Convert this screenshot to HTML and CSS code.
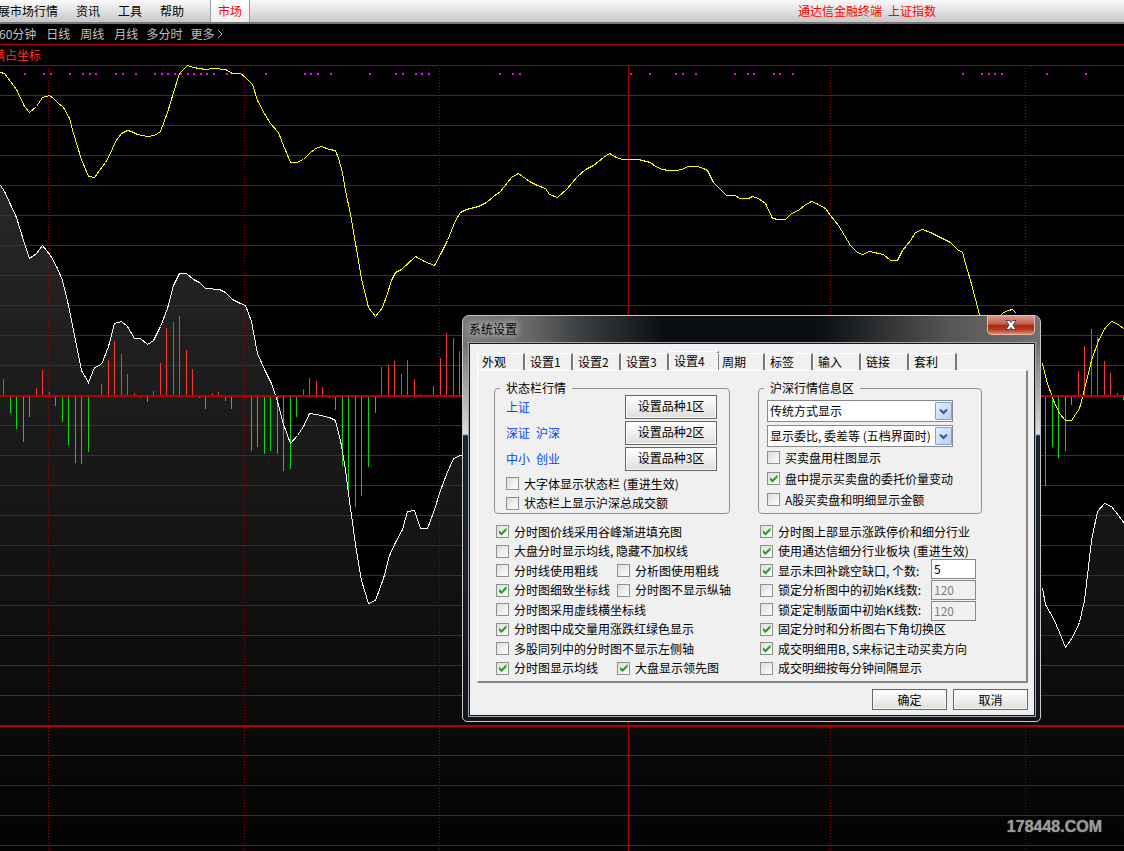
FILE: index.html
```html
<!DOCTYPE html>
<html lang="zh-CN">
<head>
<meta charset="utf-8">
<title>通达信金融终端</title>
<link rel="stylesheet" href="styles.css">
</head>
<body>
<header class="menubar">
  <nav class="menus">
    <button class="menu">展市场行情</button>
    <button class="menu">资讯</button>
    <button class="menu">工具</button>
    <button class="menu">帮助</button>
  </nav>
  <button class="market">市场</button>
  <h1 class="app-title">通达信金融终端&ensp;上证指数</h1>
</header>
<nav class="periods">
  <button class="period">60分钟</button>
  <button class="period">日线</button>
  <button class="period">周线</button>
  <button class="period">月线</button>
  <button class="period tight">多分时</button>
  <button class="period tight">更多 <svg class="chevron" viewBox="0 0 6 10" aria-hidden="true"><path d="M1 1l4 4-4 4"/></svg></button>
</nav>
<main class="stage">
  <p class="axis-note"><span>满占坐标</span></p>
  <svg class="chart" viewBox="0 62 1124 789" preserveAspectRatio="xMinYMin slice" role="img" aria-label="上证指数分时走势">
    <defs>
      <linearGradient id="fill" gradientUnits="userSpaceOnUse" x1="0" y1="65" x2="0" y2="851">
        <stop offset="0" stop-color="#2e2e2e"/><stop offset="1" stop-color="#030303"/>
      </linearGradient>
    </defs>
    <path fill="url(#fill)" d="M0 185L4 191 16 217 24 243 29 258 36 253 42 245 50 255 57 268 62 280 68 305 75 340 81 370 88 382 94 367 101 364 108 346 114 323 121 321 127 326 134 338 140 338 147 344 153 340 160 326 167 308 173 285 179 273 186 273 193 279 199 282 205 288 219 289 225 292 232 299 240 303 245 305 251 321 257 353 264 369 271 383 277 401 283 424 290 443 297 435 303 426 309 413 316 414 329 417 335 420 341 445 345 470 348 493 355 544 361 580 368 603 375 600 383 578 389 555 395 542 402 529 407 511 414 510 420 528 427 528 433 512 440 490 446 474 453 458 460 455 1000 455 1042 588 1045 604 1053 618 1059 632 1065 647 1072 637 1079 622 1084 600 1088 566 1091 540 1097 511 1104 503 1111 506 1118 515 1124 523V851H0Z"/>
    <g class="crisp" transform="translate(.5 .5)">
      <path class="grid" d="M-1 65H1124M-1 95H1124M-1 125H1124M-1 155H1124M-1 185H1124M-1 215H1124M-1 245H1124M-1 275H1124M-1 305H1124M-1 335H1124M-1 365H1124M-1 425H1124M-1 455H1124M-1 485H1124M-1 515H1124M-1 545H1124M-1 575H1124M-1 605H1124M-1 635H1124M-1 665H1124M-1 695H1124M-1 755H1124M-1 785H1124M-1 815H1124M-1 845H1124M628 65V851"/>
      <path class="grid dots" d="M48 67.5V851M244 67.5V851M439 67.5V851M830 67.5V851M1025 67.5V851"/>
      <path class="up" d="M3 378V395M36 387V395M42 369V395M49 391V395M101 383V395M108 359V395M114 340V395M121 353V395M127 373V395M134 392V395M153 390V395M160 362V395M166 327V395M173 321V395M179 315V395M186 349V395M192 368V395M212 392V395M218 391V395M303 388V395M309 377V395M316 380V395M322 386V395M381 366V395M388 364V395M394 360V395M401 373V395M407 359V395M414 378V395M420 393V395M427 394V395M433 385V395M440 357V395M446 332V395M453 337V395M459 350V395M1078 370V395M1084 345V395M1091 328V395M1097 336V395M1104 360V395M1110 372V395M1117 392V395"/>
      <path class="down" d="M10 396V412M16 396V428M23 396V441M29 396V416M55 396V405M62 396V421M68 396V444M75 396V462M81 396V463M88 396V451M140 396V397M147 396V401M199 396V397M205 396V408M225 396V400M231 396V408M251 396V450M257 396V446M264 396V453M270 396V450M277 396V453M283 396V470M290 396V468M296 396V416M329 396V397M335 396V409M342 396V465M348 396V495M355 396V506M361 396V495M368 396V466M375 396V412M1045 396V485M1052 396V446M1058 396V457M1065 396V450M1071 396V404M1123 396V399"/>
      <path class="price" d="M0 185L4 191 16 217 24 243 29 258 36 253 42 245 50 255 57 268 62 280 68 305 75 340 81 370 88 382 94 367 101 364 108 346 114 323 121 321 127 326 134 338 140 338 147 344 153 340 160 326 167 308 173 285 179 273 186 273 193 279 199 282 205 288 219 289 225 292 232 299 240 303 245 305 251 321 257 353 264 369 271 383 277 401 283 424 290 443 297 435 303 426 309 413 316 414 329 417 335 420 341 445 345 470 348 493 355 544 361 580 368 603 375 600 383 578 389 555 395 542 402 529 407 511 414 510 420 528 427 528 433 512 440 490 446 474 453 458 460 455 470 455M1042 588L1045 604 1053 618 1059 632 1065 647 1072 637 1079 622 1084 600 1088 566 1091 540 1097 511 1104 503 1111 506 1118 515 1124 523"/>
      <path class="average" d="M0 72L4 73 16 89 24 106 29 112 36 106 42 97 49 95 53 98 57 102 63 107 69 118 73 133 77 146 81 159 88 176 94 177 99 170 105 162 109 155 115 141 121 133 127 130 131 131 137 134 147 136 154 135 160 131 167 112 173 92 179 73 187 65 193 67 205 69 213 68 225 69 232 73 240 73 245 77 252 84 257 100 265 115 270 123 278 132 283 145 290 162 296 162 303 159 309 153 315 148 321 146 329 149 335 150 338 158 342 172 344 185 350 214 355 243 361 278 368 307 375 316 382 307 386 296 391 280 395 272 401 269 415 256 424 261 434 265 441 252 447 240 455 220 460 212 466 209 478 206 486 202 493 196 500 191 511 177 518 173 529 181 537 185 545 188 549 194 557 197 566 189 577 176 585 169 593 165 603 157 609 153 616 157 622 159 638 159 650 162 655 166 662 169 668 170 677 170 684 168 687 166 697 166 703 168 707 170 713 182 726 195 735 195 739 198 748 198 752 196 758 198 765 203 772 218 778 219 785 219 791 213 798 210 804 205 811 201 816 203 825 208 830 215 838 225 850 245 857 252 862 254 869 251 883 254 890 260 897 260 902 250 910 240 915 232 922 229 930 232 950 242 957 249 962 252 965 263 970 280 979 314 984 325M998 317L1003 312 1008 310 1012 309 1016 313M1042 363L1046 380 1053 400 1059 413 1065 420 1071 420 1079 408 1085 385 1091 360 1098 340 1105 327 1111 321 1118 324 1124 329"/>
    </g>
    <g class="crisp">
      <path class="axis" d="M0 396H1124M0 726H1124"/>
      <path class="ticks" d="M24 74h2m17 0h2m5 0h2m17 0h2m11 0h2m5 0h2m4 0h2m18 0h2m5 0h2m11 0h2m17 0h2m5 0h2m4 0h2m5 0h2m4 0h2m5 0h2m4 0h2m5 0h2m4 0h2m5 0h2m11 0h2m37 0h2m37 0h2m4 0h2m5 0h2m11 0h2m37 0h2m24 0h2m5 0h2m11 0h2m4 0h2m5 0h2m69 0h2m11 0h2m5 0h2m109 0h2m17 0h2m24 0h2m5 0h2m11 0h2m37 0h2m11 0h2m4 0h2m18 0h2m4 0h2m11 0h2m168 0h2m17 0h2m5 0h2m4 0h2m5 0h2m43 0h2m37 0h2"/>
    </g>
  </svg>
  <p class="watermark">178448.COM</p>
</main>

<section class="dialog" role="dialog" aria-labelledby="dialog-title">
  <header class="titlebar">
    <h2 class="dialog-title" id="dialog-title">系统设置</h2>
    <button class="close" aria-label="关闭"><svg viewBox="0 0 12 10" aria-hidden="true"><path d="M1 .5h3.500l1.500 2 1.500-2H11L8 5l3 4.500H7.500L6 7.500l-1.500 2H1L4 5z"/></svg></button>
  </header>
  <div class="client">
    <div class="tabs" role="tablist">
      <button class="tab" role="tab">外观</button>
      <button class="tab" role="tab">设置1</button>
      <button class="tab" role="tab">设置2</button>
      <button class="tab" role="tab">设置3</button>
      <button class="tab selected" role="tab" aria-selected="true">设置4</button>
      <button class="tab" role="tab">周期</button>
      <button class="tab" role="tab">标签</button>
      <button class="tab" role="tab">输入</button>
      <button class="tab" role="tab">链接</button>
      <button class="tab" role="tab">套利</button>
    </div>
    <div class="panel" role="tabpanel">
      <div class="column">
        <fieldset class="group">
          <legend>状态栏行情</legend>
          <div class="group-body status">
            <div class="quote"><span>上证</span><button class="button">设置品种1区</button></div>
            <div class="quote"><span>深证&ensp;沪深</span><button class="button">设置品种2区</button></div>
            <div class="quote"><span>中小&ensp;创业</span><button class="button">设置品种3区</button></div>
            <div class="status-options">
              <label class="check"><input type="checkbox">大字体显示状态栏 (重进生效)</label>
              <label class="check"><input type="checkbox">状态栏上显示沪深总成交额</label>
            </div>
          </div>
        </fieldset>
        <div class="options left">
          <label class="check wide"><input type="checkbox" checked>分时图价线采用谷峰渐进填充图</label>
          <label class="check wide"><input type="checkbox">大盘分时显示均线, 隐藏不加权线</label>
          <label class="check"><input type="checkbox">分时线使用粗线</label>
          <label class="check"><input type="checkbox">分析图使用粗线</label>
          <label class="check"><input type="checkbox" checked>分时图细致坐标线</label>
          <label class="check"><input type="checkbox">分时图不显示纵轴</label>
          <label class="check wide"><input type="checkbox">分时图采用虚线横坐标线</label>
          <label class="check wide"><input type="checkbox" checked>分时图中成交量用涨跌红绿色显示</label>
          <label class="check wide"><input type="checkbox">多股同列中的分时图不显示左侧轴</label>
          <label class="check"><input type="checkbox" checked>分时图显示均线</label>
          <label class="check"><input type="checkbox" checked>大盘显示领先图</label>
        </div>
      </div>
      <div class="column">
        <fieldset class="group">
          <legend>沪深行情信息区</legend>
          <div class="group-body info">
            <div class="picker">
              <select aria-label="显示方式"><option>传统方式显示</option></select>
              <span class="arrow"><svg viewBox="0 0 9 7" aria-hidden="true"><path d="M1 1.500l3.500 3.500L8 1.500"/></svg></span>
            </div>
            <div class="picker">
              <select aria-label="显示内容"><option>显示委比, 委差等 (五档界面时)</option></select>
              <span class="arrow"><svg viewBox="0 0 9 7" aria-hidden="true"><path d="M1 1.500l3.500 3.500L8 1.500"/></svg></span>
            </div>
            <div class="info-options">
              <label class="check"><input type="checkbox">买卖盘用柱图显示</label>
              <label class="check"><input type="checkbox" checked>盘中提示买卖盘的委托价量变动</label>
              <label class="check"><input type="checkbox">A股买卖盘和明细显示金额</label>
            </div>
          </div>
        </fieldset>
        <div class="options right">
          <label class="check wide"><input type="checkbox" checked>分时图上部显示涨跌停价和细分行业</label>
          <label class="check wide"><input type="checkbox" checked>使用通达信细分行业板块 (重进生效)</label>
          <label class="check" id="gap-label"><input type="checkbox" checked>显示未回补跳空缺口, 个数:</label>
          <label class="check" id="analysis-label"><input type="checkbox">锁定分析图中的初始K线数:</label>
          <label class="check" id="layout-label"><input type="checkbox">锁定定制版面中初始K线数:</label>
          <label class="check wide"><input type="checkbox" checked>固定分时和分析图右下角切换区</label>
          <label class="check wide"><input type="checkbox" checked>成交明细用B, S来标记主动买卖方向</label>
          <label class="check wide"><input type="checkbox">成交明细按每分钟间隔显示</label>
          <div class="numbers">
            <input class="number" type="text" value="5" aria-labelledby="gap-label">
            <input class="number" type="text" value="120" aria-labelledby="analysis-label" disabled>
            <input class="number" type="text" value="120" aria-labelledby="layout-label" disabled>
          </div>
        </div>
      </div>
    </div>
    <footer class="actions">
      <button class="button">确定</button>
      <button class="button">取消</button>
    </footer>
  </div>
</section>
</body>
</html>
```
FILE: styles.css
```css
* { box-sizing: border-box; }

body {
  margin: 0;
  height: 100vh;
  display: flex;
  flex-direction: column;
  overflow: hidden;
  background: #000;
  color: #000;
  font: 12px/14px "Noto Sans CJK SC", "Liberation Sans", sans-serif;
}

button, input, select { font: inherit; color: inherit; margin: 0; }
button { padding: 0; border: 0; background: none; white-space: nowrap; }
h1, h2, p { margin: 0; font: inherit; }

/* Main window bars */
.menubar {
  display: flex;
  flex: none;
  height: 24px;
  background: linear-gradient(#fafafa, #c8c8c8);
  border-bottom: 2px solid #777;
}
.menus { display: flex; gap: 18px; width: 212px; margin-left: -2px; }
.market {
  width: 40px;
  color: #f00;
  background: linear-gradient(#fff, #eee);
  border-left: 1px solid #999;
  border-right: 1px solid #999;
}
.app-title { margin-left: auto; margin-right: 188px; line-height: 22px; color: #f00; }

.periods {
  display: flex;
  flex: none;
  gap: 10px;
  height: 21px;
  margin-left: -1px;
  color: #c0c0c0;
  border-bottom: 1px solid #b00000;
}
.period.tight { margin-left: -2px; }
.chevron { width: 6px; height: 10px; fill: none; stroke: #c0c0c0; }

/* Chart */
.stage { position: relative; display: flex; flex: 1; flex-direction: column; min-height: 0; }
.axis-note { flex: none; height: 17px; line-height: 20px; color: #f33; }
.axis-note span { margin-left: -7px; }
.chart { display: block; flex: 1; width: 100%; min-height: 0; }
.crisp { shape-rendering: crispEdges; fill: none; }
.grid { stroke: #a80000; }
.dots { stroke-dasharray: 1 2; }
.axis { stroke: #b00000; stroke-width: 2; }
.up { stroke: #f33; }
.down { stroke: #00e000; }
.price { stroke: #fff; }
.average { stroke: #ff0; }
.ticks { stroke: #f0f; stroke-width: 2; }
.watermark {
  position: absolute;
  right: 22px;
  bottom: 12px;
  color: #999;
  font: bold 16px/24px "Liberation Sans", sans-serif;
  text-shadow: 0 0 1px #999;
}

/* Dialog window */
.dialog {
  position: absolute;
  left: 462px;
  top: 315px;
  width: 579px;
  padding: 0 5px 5px 6px;
  border: 1px solid #c4c8cc;
  border-radius: 7px 7px 5px 5px;
  background:
    linear-gradient(90deg, #777 0, #666 12%, #3c4042 20%, #0b0f13 35%, #0b0f13 62%, #555 84%, #70706f) top / 100% 27px no-repeat,
    linear-gradient(#70706f 27px, #ddd 118px, #18212a 120px, #1d222c 60%, #11161d);
}
.titlebar { display: flex; justify-content: space-between; height: 27px; }
.dialog-title { line-height: 25px; text-shadow: 0 0 6px #ccc, 0 0 10px #bbb, 0 0 14px #aaa; }
.close {
  width: 48px;
  height: 19px;
  border: 1px solid #e8b8ac;
  border-top: 0;
  border-radius: 0 0 5px 5px;
  background: linear-gradient(#d8998c, #c4604c 45%, #a82812 50%, #b83a20 75%, #e08a68);
}
.close svg { display: block; width: 12px; height: 10px; margin: 0 auto; fill: #fff; stroke: #445; stroke-width: 1; overflow: visible; }
.client { padding: 7px 6px 5px 7px; background: #f0f0f0; border: 1px solid #11161d; outline: 1px solid #a4a9ae; }

/* Tabs */
.tabs { display: flex; align-items: flex-end; height: 19px; }
.tab {
  width: 48px;
  height: 17px;
  padding-left: 4px;
  line-height: 16px;
  text-align: left;
  border-top: 1px solid #fff;
  border-left: 1px solid #fff;
  border-right: 2px solid #777;
}
.tab.selected { width: 50px; height: 19px; margin-right: -2px; }
.panel {
  display: grid;
  grid-template-columns: 236px 224px;
  gap: 28px;
  padding: 10px 17px 3px 16px;
  border: 1px solid #fff;
  border-right: 2px solid #888;
  border-bottom: 2px solid #888;
}

/* Groups */
.group {
  height: 133px;
  margin: 0;
  padding: 0;
  border: 1px solid #909090;
  border-radius: 4px;
}
.group legend { margin-left: 5px; padding: 0 6px; }
.status { padding: 0 12px 0 11px; }
.quote { display: flex; justify-content: space-between; margin-bottom: 2px; color: #0046ff; line-height: 24px; }
.status-options { display: grid; grid-template-rows: 19px 20px; padding-top: 1px; }
.info { padding: 5px 28px 0 8px; }
.info-options { display: grid; grid-auto-rows: 21px; margin-top: -3px; }

.button {
  width: 92px;
  height: 24px;
  color: #000;
  border: 1px solid #666;
  background: linear-gradient(#fff, #ececec 60%, #dcdcda);
  box-shadow: inset 0 0 0 1px #fafafa;
}
.quote .button { line-height: 20px; padding-bottom: 2px; }

.picker { position: relative; margin-bottom: 3px; }
.picker select {
  display: block;
  appearance: none;
  width: 100%;
  height: 22px;
  padding: 0 2px;
  border: 1px solid #888;
  border-radius: 0;
  background: #fff;
}
.arrow {
  position: absolute;
  top: 2px;
  right: 1px;
  display: grid;
  place-items: center;
  width: 17px;
  height: 18px;
  border: 1px solid #7f9fdc;
  border-radius: 1px;
  background: linear-gradient(135deg, #e4eeff, #b4d0fc);
  pointer-events: none;
}
.arrow svg { width: 9px; height: 7px; fill: none; stroke: #42557c; stroke-width: 2; }

/* Option lists */
.options { display: grid; grid-template-rows: repeat(4, 19px 20px); padding: 8px 0 0 2px; }
.left { grid-template-columns: 121px 1fr; }
.right { grid-template-columns: 171px 45px; }
.wide { grid-column: 1 / -1; }
.check { display: flex; align-items: center; gap: 5px; white-space: nowrap; }
.check input {
  appearance: none;
  display: grid;
  place-items: center;
  flex: none;
  width: 13px;
  height: 13px;
  border: 1px solid #8e8f8f;
  background: linear-gradient(135deg, #dcdcd7, #fff);
}
.check input:checked::before {
  content: "";
  width: 8px;
  height: 8px;
  background: #21a121;
  clip-path: polygon(0 30%, 38% 62%, 100% 0, 100% 36%, 38% 100%, 0 66%);
}
.numbers { grid-column: 2; grid-row: 3 / 6; align-self: center; display: grid; gap: 1px; }
.number { width: 45px; height: 20px; padding: 0 2px 2px; border: 1px solid #888; border-radius: 0; background: #fff; }
.number:disabled { color: #808080; background: #f0f0f0; }

.actions { display: flex; justify-content: flex-end; gap: 6px; padding-top: 6px; }
.actions .button { width: 75px; height: 21px; }
```
